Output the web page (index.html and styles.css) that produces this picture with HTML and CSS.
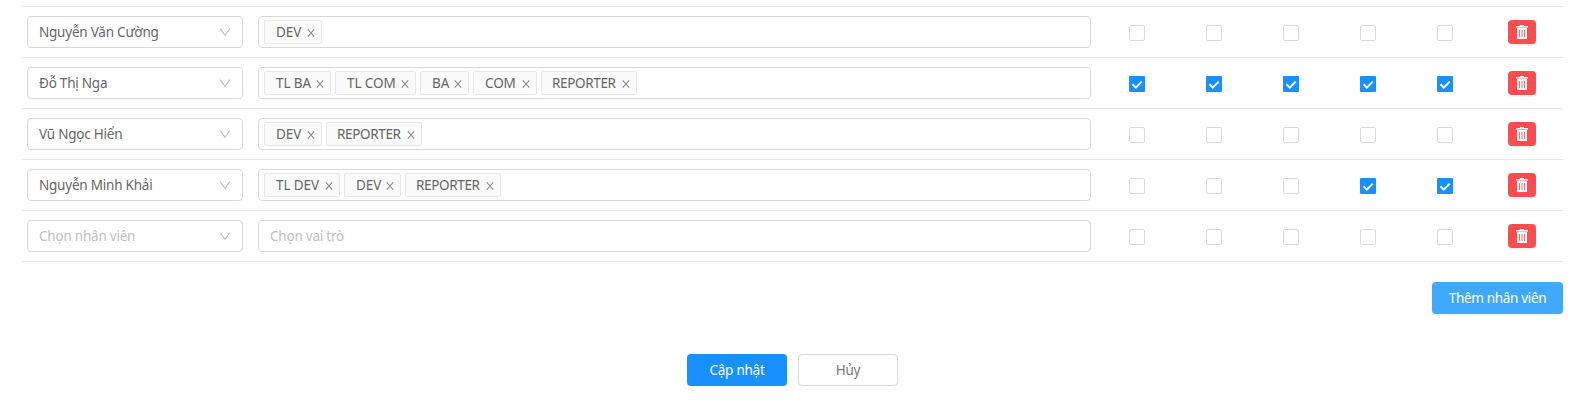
FILE: index.html
```html
<!DOCTYPE html>
<html lang="vi">
<head>
<meta charset="utf-8">
<title>Nhân viên</title>
<link rel="stylesheet" href="styles.css">
</head>
<body>
<svg class="defs" aria-hidden="true">
  <symbol id="down" viewBox="0 0 12 12"><path d="M1.2 2.6 6 9.3l4.8-6.7" fill="none" stroke="currentColor" stroke-width="1.1"/></symbol>
  <symbol id="close" viewBox="0 0 8 8"><path d="M.8.3 7.2 7.7M7.2.3.8 7.7" fill="none" stroke="currentColor" stroke-width="1.05"/></symbol>
  <symbol id="check" viewBox="0 0 16 16"><path d="m3.5 8.2 3.3 3.4 5.9-6" fill="none" stroke="#fff" stroke-width="2"/></symbol>
  <symbol id="trash" viewBox="0 0 12 14"><path fill="#fff" d="M4 0h4v1h4v1.2H0V1h4zM1 3h10v11H1z"/><path fill="#ffb3b4" d="M0 2h12v1H0z"/><path d="M3.5 5v7M8.5 5v7" stroke="#ff6a6c"/><path d="M5.5 5v7M6.5 5v7" stroke="#ffb3b4"/></symbol>
</svg>
<main class="page">
  <div class="table" id="table"></div>
  <div class="add"><button class="btn btn-add"><span>Thêm nhân viên</span></button></div>
  <div class="actions"><button class="btn btn-primary"><span>Cập nhật</span></button><button class="btn btn-default"><span>Hủy</span></button></div>
</main>
<script src="app.js"></script>
</body>
</html>
```
FILE: styles.css
```css
* { box-sizing: border-box; }
body { margin: 0; background: #fff; color: #666; font: 13.5px/22px "Noto Sans", "Open Sans", sans-serif; letter-spacing: -.22px; }
.defs { position: absolute; width: 0; height: 0; }
.page { padding: 6px 19px 0 22px; }
.table { border-top: 1px solid #e8e8e8; }
.row { display: grid; grid-template-columns: 231px 845px repeat(5, 77px) 78px; align-items: center; height: 51px; border-bottom: 1px solid #e8e8e8; }
.select { display: flex; align-items: center; justify-content: space-between; width: 216px; height: 32px; margin-left: 5px; padding: 0 11px; border: 1px solid #d9d9d9; border-radius: 4px; }
.label { display: block; white-space: nowrap; }
.placeholder { color: #bfbfbf; }
.down { width: 12px; height: 12px; color: #bfbfbf; }
.roles { display: flex; align-items: center; gap: 4px; width: 833px; height: 32px; margin-left: 5px; padding: 0 5px; border: 1px solid #d9d9d9; border-radius: 4px; }
.roles .placeholder { padding-left: 6px; }
.tag { display: flex; align-items: center; justify-content: space-between; height: 24px; padding: 0 6px 0 11px; border: 1px solid #e8e8e8; border-radius: 2px; background: #fafafa; letter-spacing: -.1px; }
.tag-long { padding-left: 10px; letter-spacing: -.35px; }
.close { width: 8px; height: 8px; margin-top: 2px; color: #8c8c8c; }
.check { justify-self: center; width: 16px; height: 16px; margin-top: 2px; border: 1px solid #d9d9d9; border-radius: 2px; }
.checked { border: 0; border-radius: 1px; background: #1890ff; }
.check svg { display: block; width: 16px; height: 16px; }
.trash { display: flex; align-items: center; justify-content: center; justify-self: center; width: 28px; height: 24px; padding: 0; border: 0; border-radius: 4px; background: #ff4d4f; box-shadow: 0 2px 0 rgba(0, 0, 0, .04); }
.trash svg { width: 12px; height: 14px; }
.btn { display: flex; align-items: center; justify-content: center; height: 32px; padding: 0; border: 0; border-radius: 4px; font: inherit; letter-spacing: -.25px; color: #fff; box-shadow: 0 2px 0 rgba(0, 0, 0, .04); }
.add { display: flex; justify-content: flex-end; margin-top: 20px; }
.btn-add { width: 131px; background: #40a9ff; letter-spacing: -.32px; }
.actions { display: flex; gap: 11px; margin: 40px 0 0 665px; }
.btn-primary { width: 100px; background: #1890ff; }
.btn-default { width: 100px; border: 1px solid #d9d9d9; background: #fff; color: #777; box-shadow: 0 2px 0 rgba(0, 0, 0, .015); }
```
FILE: app.js
```js
const rows = [
  { name: "Nguyễn Văn Cường", roles: [["DEV", 58]], checks: [0, 0, 0, 0, 0] },
  { name: "Đỗ Thị Nga", roles: [["TL BA", 67], ["TL COM", 81], ["BA", 49], ["COM", 64], ["REPORTER", 96]], checks: [1, 1, 1, 1, 1] },
  { name: "Vũ Ngọc Hiển", roles: [["DEV", 58], ["REPORTER", 96]], checks: [0, 0, 0, 0, 0] },
  { name: "Nguyễn Minh Khải", roles: [["TL DEV", 76], ["DEV", 57], ["REPORTER", 96]], checks: [0, 0, 0, 1, 1] },
  { name: "", roles: [], checks: [0, 0, 0, 0, 0] }
];
const icon = (id, cls = "") => `<svg class="${cls}"><use href="#${id}"/></svg>`;
const tag = ([text, width]) => `<span class="tag ${text.length > 6 ? "tag-long" : ""}" style="width:${width}px"><span class="label">${text}</span>${icon("close", "close")}</span>`;
document.getElementById("table").innerHTML = rows.map(r => `
  <div class="row">
    <div class="select"><span class="label ${r.name ? "" : "placeholder"}">${r.name || "Chọn nhân viên"}</span>${icon("down", "down")}</div>
    <div class="roles">${r.roles.map(tag).join("") || '<span class="label placeholder">Chọn vai trò</span>'}</div>
    ${r.checks.map(c => `<span class="check ${c ? "checked" : ""}">${c ? icon("check") : ""}</span>`).join("")}
    <button class="trash">${icon("trash")}</button>
  </div>`).join("");
```
